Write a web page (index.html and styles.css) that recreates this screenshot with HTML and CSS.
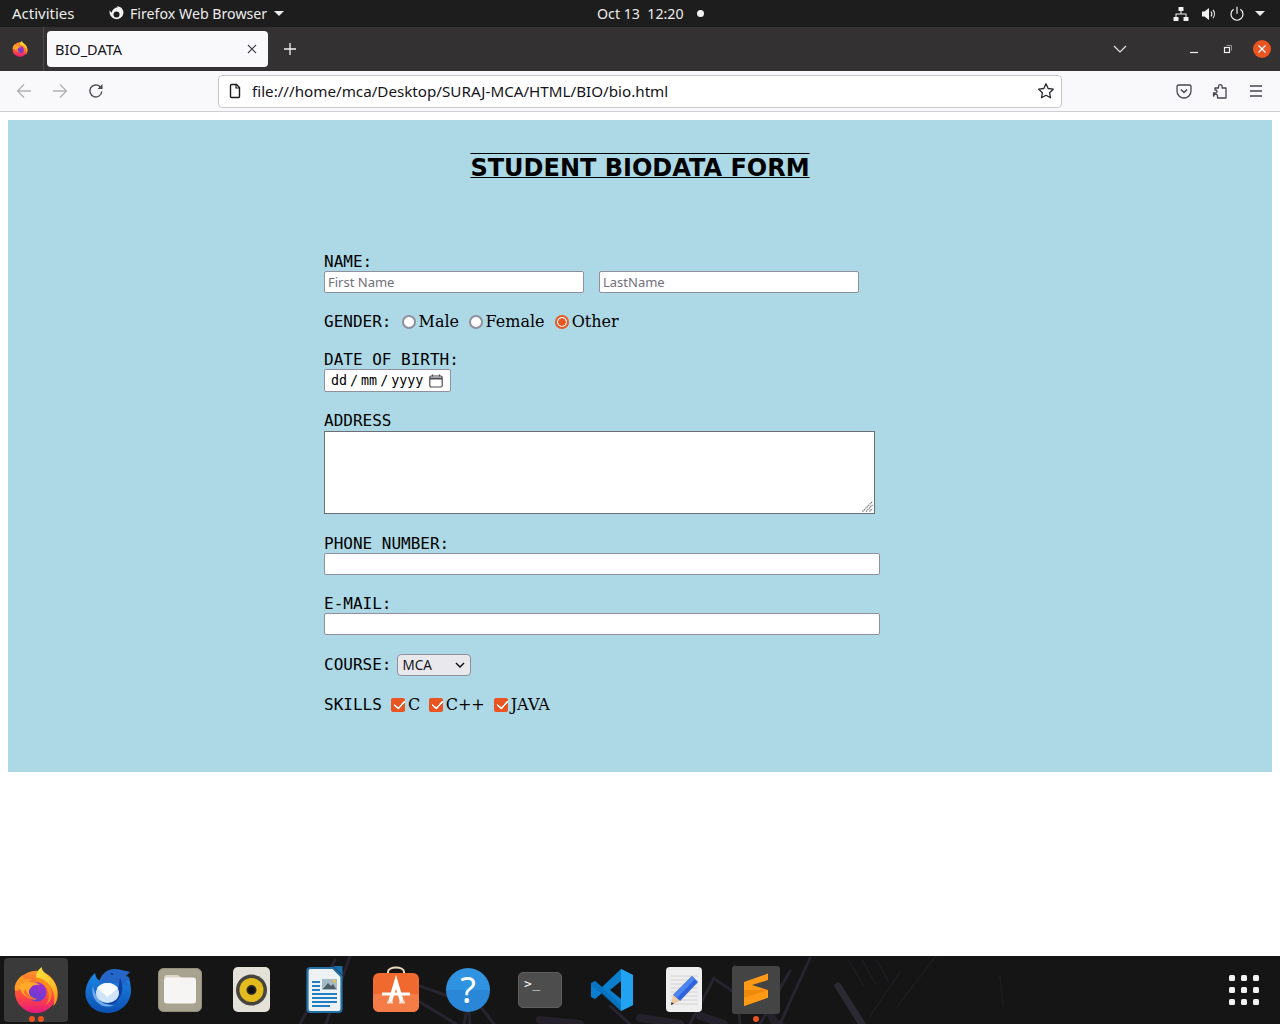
FILE: index.html
```html
<!DOCTYPE html>
<html lang="en">
<head>
<meta charset="utf-8">
<title>BIO_DATA</title>
<link rel="stylesheet" href="styles.css">
</head>
<body>
<svg class="defs" width="0" height="0" aria-hidden="true">
  <defs>
    <linearGradient id="ffBody" x1="0" y1="0" x2="0" y2="1"><stop offset="0" stop-color="#ff9226"/><stop offset=".6" stop-color="#ff4a3f"/><stop offset="1" stop-color="#e5187f"/></linearGradient>
    <linearGradient id="ffFlame" x1="0" y1="0" x2="1" y2="1"><stop offset="0" stop-color="#ffe53f"/><stop offset=".6" stop-color="#ffc12a"/><stop offset="1" stop-color="#ff8516"/></linearGradient>
    <linearGradient id="ffCore" x1="0.700" y1="0" x2="0.300" y2="1"><stop offset="0" stop-color="#a62fc6"/><stop offset="1" stop-color="#5a3ed8"/></linearGradient>
    <symbol id="firefox" viewBox="0 0 48 48">
      <circle cx="24" cy="26" r="22" fill="url(#ffBody)"/>
      <path d="M30 0c0 5 5 7 10 12 6 6 8 14 6 22-1 3-2 5-4 7 3-9 0-19-6-24-4-3-8-5-12-6 0-5 2-8 6-11z" fill="url(#ffFlame)"/>
      <path d="M2 24c-1-5 2-10 5-13 1-1 2-2 3-3 0 2 1 4 3 5 2-1 5-1 8 0-5 2-11 5-14 10-2 2-4 3-5 1z" fill="#ff9a24"/>
      <path d="M24 11c11 1 18 10 16 20-1 4-3 7-6 9 3-4 4-9 3-13-1-6-6-10-13-11z" fill="#ff8a1c"/>
      <circle cx="25" cy="26" r="10" fill="url(#ffCore)"/>
      <path d="M6 20c3-3 8-5 13-4 4 0 7 1 9 3-4-1-7 0-9 2-2 2-3 4-2 7 1 3 4 5 7 6-6 0-12-3-15-8-1-2-2-4-3-6z" fill="#ffab2a"/>
      <path d="M13 23c2 6 7 10 13 10-5 2-11 0-14-5-1-2 0-4 1-5z" fill="#ff6a2c"/>
    </symbol>
  </defs>
</svg>

<header class="topbar">
  <span class="activities">Activities</span>
  <span class="appmenu">
    <svg class="app-glyph" width="16" height="16" viewBox="0 0 16 16"><path d="M8 1.500c.6 0 1.200.1 1.700.2L9 0l3.500 1.300c1.800 1.200 3 3.300 3 5.700A7 7 0 1 1 1.800 4.300c.5 1.200 1.200 1.900 2 2.200C4.300 4 5.700 2.700 8 1.500z" fill="#f2f2f2"/><circle cx="8.500" cy="8.500" r="3" fill="#1d1d1d"/></svg>
    Firefox Web Browser
    <i class="caret"></i>
  </span>
  <span class="clock">Oct 13&nbsp; 12:20<i class="clock-dot"></i></span>
  <span class="tray">
    <svg width="16" height="16" viewBox="0 0 16 16" fill="#f2f2f2"><rect x="5.500" y="1" width="5" height="4" rx=".5"/><rect x=".5" y="11" width="5" height="4" rx=".5"/><rect x="10.500" y="11" width="5" height="4" rx=".5"/><path d="M7.500 5h1v2.500H13.500V11h-1V8.500H3.500V11h-1V7.500h5z"/></svg>
    <svg width="16" height="16" viewBox="0 0 16 16"><path d="M1 5.500h2.500L8 2v12l-4.500-3.500H1z" fill="#f2f2f2"/><path d="M10 5.500c1 1.400 1 3.600 0 5M12 3.800c1.900 2.400 1.900 6 0 8.400" fill="none" stroke="#f2f2f2" stroke-width="1.100"/></svg>
    <svg width="16" height="16" viewBox="0 0 16 16" fill="none" stroke="#f2f2f2" stroke-width="1.200"><path d="M4.600 3.300a6 6 0 1 0 6.800 0"/><path d="M8 .8v7"/></svg>
    <i class="caret tray-caret"></i>
  </span>
</header>

<div class="tabbar">
  <svg class="tab-ff" width="16" height="16"><use href="#firefox"/></svg>
  <i class="tab-sep"></i>
  <div class="tab">
    <span class="tab-title">BIO_DATA</span>
    <svg class="tab-close" width="10" height="10" viewBox="0 0 10 10" stroke="#45454d" stroke-width="1.100"><path d="M1 1l8 8M9 1l-8 8"/></svg>
  </div>
  <svg class="newtab" width="14" height="14" viewBox="0 0 14 14" stroke="#f4f4f4" stroke-width="1.300"><path d="M7 1v12M1 7h12"/></svg>
  <div class="win-controls">
    <svg class="chevron" width="14" height="8" viewBox="0 0 14 8" fill="none" stroke="#e4e4e4" stroke-width="1.200"><path d="M1 1l6 6 6-6"/></svg>
    <svg class="win-min" width="10" height="10" viewBox="0 0 10 10" stroke="#f2f2f2" stroke-width="1.200"><path d="M1 8.500h8"/></svg>
    <svg class="win-max" width="10" height="10" viewBox="0 0 10 10" fill="none" stroke="#f2f2f2"><rect x="1.500" y="3.500" width="5" height="5" stroke-width="1.200"/><path d="M3.500 1.500h5v5" stroke-width=".8" stroke="#aaa"/></svg>
    <span class="win-close"><svg width="10" height="10" viewBox="0 0 10 10" stroke="#fff" stroke-width="1.300"><path d="M1.500 1.500l7 7M8.500 1.500l-7 7"/></svg></span>
  </div>
</div>

<nav class="navbar">
  <svg class="nav-btn" width="16" height="16" viewBox="0 0 16 16" fill="none" stroke="#b1b1b3" stroke-width="1.300"><path d="M15 8H1.500M8 1.500L1.500 8 8 14.500"/></svg>
  <svg class="nav-btn" width="16" height="16" viewBox="0 0 16 16" fill="none" stroke="#b1b1b3" stroke-width="1.300"><path d="M1 8h13.500M8 1.500L14.500 8 8 14.500"/></svg>
  <svg class="nav-btn" width="16" height="16" viewBox="0 0 16 16" fill="none" stroke="#4a4a4f" stroke-width="1.400"><path d="M13.800 8.500a6 6 0 1 1-1.600-4.700L14 5.500"/><path d="M14.500 1v5h-5" fill="#4a4a4f" stroke="none"/></svg>
  <div class="urlbar">
    <svg class="url-file" width="16" height="16" viewBox="0 0 16 16" fill="none" stroke="#1b1b1f" stroke-width="1.400"><path d="M3.500 2.500c0-.6.400-1 1-1h5l3 3v9c0 .6-.4 1-1 1h-7c-.6 0-1-.4-1-1z"/><path d="M9 1.500V5h3.500" stroke-width="1.200"/></svg>
    <span class="url-text">file:///home/mca/Desktop/SURAJ-MCA/HTML/BIO/bio.html</span>
    <svg class="url-star" width="18" height="18" viewBox="0 0 18 18" fill="none" stroke="#2a2a2e" stroke-width="1.300" stroke-linejoin="round"><path d="M9 1.800l2.200 4.700 5.100.7-3.700 3.500.9 5.100L9 13.300l-4.500 2.500.9-5.100L1.700 7.200l5.100-.7z"/></svg>
  </div>
  <div class="nav-right">
    <svg width="16" height="16" viewBox="0 0 16 16" fill="none" stroke="#45454d" stroke-width="1.300"><path d="M2.500 2h11c.8 0 1.500.7 1.500 1.500V8a7 7 0 0 1-14 0V3.500C1 2.700 1.700 2 2.500 2z"/><path d="M5 6.500L8 9.500l3-3" stroke-width="1.500"/></svg>
    <svg width="16" height="16" viewBox="0 0 16 16" fill="none" stroke="#45454d" stroke-width="1.300" stroke-linejoin="round"><path d="M1.500 10h2a1.500 1.500 0 0 0 0-3h-.5V5h3.500V3.500a1.800 1.800 0 0 1 3.600 0V5H14v10H5.500v-2a1.800 1.800 0 0 0-3.600 0H1.500z"/></svg>
    <svg width="16" height="16" viewBox="0 0 16 16" stroke="#45454d" stroke-width="1.300"><path d="M2 3h12M2 8h12M2 13h12"/></svg>
  </div>
</nav>

<main class="page">
  <section class="panel">
    <h1 class="form-title">STUDENT BIODATA FORM</h1>
    <form class="bio-form">
      <div class="field">
        <label class="label">NAME:</label>
        <div class="name-row">
          <input class="text-input name-input" type="text" placeholder="First Name">
          <input class="text-input name-input" type="text" placeholder="LastName">
        </div>
      </div>
      <div class="field inline">
        <span class="label">GENDER:</span>
        <input class="radio r-male" type="radio" name="g"><span class="opt">Male</span>
        <input class="radio r-female" type="radio" name="g"><span class="opt">Female</span>
        <input class="radio r-other" type="radio" name="g" checked><span class="opt">Other</span>
      </div>
      <div class="field">
        <label class="label">DATE OF BIRTH:</label>
        <div class="date-input">
          <span>dd</span><span class="date-sep">/</span><span>mm</span><span class="date-sep">/</span><span>yyyy</span>
          <svg class="date-icon" width="14" height="14" viewBox="0 0 14 14" fill="none" stroke="#4a4a50" stroke-width="1.200"><rect x=".8" y="2" width="12.400" height="11" rx="1.500"/><path d="M1 4.500h12" stroke-width="2"/><path d="M3.500 .5v2M10.500 .5v2"/></svg>
        </div>
      </div>
      <div class="field">
        <label class="label">ADDRESS</label>
        <div class="address-wrap">
          <textarea class="address"></textarea>
          <svg class="resizer" width="11" height="11" viewBox="0 0 11 11" fill="none" stroke="#777" stroke-width="1.200" stroke-dasharray="1.400 .6"><path d="M.5 10.500l10-10M4 10.500l6.500-6.500M7.500 10.500l3-3"/></svg>
        </div>
      </div>
      <div class="field">
        <label class="label">PHONE NUMBER:</label>
        <input class="text-input wide-input" type="text">
      </div>
      <div class="field">
        <label class="label">E-MAIL:</label>
        <input class="text-input wide-input" type="text">
      </div>
      <div class="field inline course-row">
        <span class="label">COURSE:</span>
        <span class="select-wrap">
          <select class="course"><option>MCA</option></select>
          <svg class="select-arrow" width="10" height="6" viewBox="0 0 10 6" fill="none" stroke="#15141a" stroke-width="1.500"><path d="M1 1l4 4 4-4"/></svg>
        </span>
      </div>
      <div class="field inline">
        <span class="label">SKILLS</span>
        <input class="check c-c" type="checkbox" checked><span class="opt">C</span>
        <input class="check c-cpp" type="checkbox" checked><span class="opt">C++</span>
        <input class="check c-java" type="checkbox" checked><span class="opt">JAVA</span>
      </div>
    </form>
  </section>
</main>

<footer class="dock">
  <svg class="wallpaper" width="1280" height="68" viewBox="0 0 1280 68" fill="none" stroke-linecap="round">
    <g stroke="#272430" stroke-width="3">
      <path d="M335 4L300 68M350 0l-24 68M420 30l50 18M420 46l36 22M466 14l4 54M470 40l-6 28M480 50l14 18M690 68l24-46M716 24l66 44M735 10l5 58M790 15l-30 53M810 2l-30 66M610 50l20 18"/>
    </g>
    <g stroke="#24212a" stroke-width="8">
      <path d="M540 64l40 4M640 62l40 6M755 22l20 46M700 60l24 8"/>
    </g>
    <g stroke="#2b2931" stroke-width="7">
      <path d="M838 30l24 38"/>
    </g>
    <g stroke="#1e1c22" stroke-width="1.500">
      <path d="M848 4l16 26M862 4l14 24M876 4l12 20M900 16l-30 44M936 0l-40 52M1000 20l3 30"/>
    </g>
  </svg>

  <div class="dock-item active">
    <svg width="46" height="46"><use href="#firefox"/></svg>
    <span class="dots"><i></i><i></i></span>
  </div>

  <div class="dock-item">
    <svg width="48" height="48" viewBox="0 0 48 48">
      <defs><linearGradient id="tbBlue" x1="0" y1="0" x2="0" y2="1"><stop offset="0" stop-color="#1e88e6"/><stop offset="1" stop-color="#0b50b4"/></linearGradient></defs>
      <path d="M11 7C3 14 0 24 2 32c3 10 12 15 22 15 12 0 22-9 23-21 0-6-1-12-3-16l-4 3-22 2c-3 0-6-2-7-8z" fill="url(#tbBlue)"/>
      <path d="M15 17c1-8 8-14 15-14 6 0 11 2 16 3l-4 4 4 3-4 2 2 5c-6-2-12-4-29-3z" fill="#2566c9"/>
      <circle cx="28" cy="8" r="1" fill="#0b2f70"/>
      <path d="M36 12c4 8 3 17-3 23-5 4-11 5-16 3 9-1 15-6 17-13 1-4 1-9 2-13z" fill="#0f3f9f"/>
      <path d="M9 20c-2 8 1 15 8 19 4 2 9 2 13 0-7 0-13-2-16-7-3-4-4-8-5-12z" fill="#6da8ec"/>
      <ellipse cx="23.500" cy="27" rx="11.500" ry="10" fill="#cfe3f9"/>
      <path d="M13 22c2-3 6-5 10.500-5s8.500 2 10.500 5L23.500 31z" fill="#fafcff"/>
    </svg>
  </div>

  <div class="dock-item">
    <svg width="48" height="48" viewBox="0 0 48 48">
      <rect x="2" y="2" width="44" height="44" rx="6" fill="#a8a290"/>
      <rect x="2.500" y="2.500" width="43" height="43" rx="5.500" fill="none" stroke="#928c7b"/>
      <path d="M8 12c0-1.500 1-3 3-3h11l4 3z" fill="#dcd8cc"/>
      <rect x="8" y="11.500" width="32" height="26" rx="3" fill="#f6f5f3"/>
    </svg>
  </div>

  <div class="dock-item">
    <svg width="48" height="48" viewBox="0 0 48 48">
      <rect x="5" y="1" width="37" height="45" rx="5" fill="#e4e1d8"/>
      <circle cx="23.500" cy="24" r="15.500" fill="#45443f"/>
      <circle cx="23.500" cy="24" r="12" fill="#e3bb1c"/>
      <circle cx="23.500" cy="24" r="5" fill="#2a2a28"/>
      <circle cx="23.500" cy="24" r="3.200" fill="#111"/>
    </svg>
  </div>

  <div class="dock-item">
    <svg width="48" height="48" viewBox="0 0 48 48">
      <path d="M7.500 5c0-2 1-3 3-3H33l8.500 8.500V43c0 2-1 3-3 3h-28c-2 0-3-1-3-3z" fill="#eef2f5" stroke="#2272a8" stroke-width="2.200"/>
      <path d="M33 0h9.500v9.500z" fill="#1a6ea8"/>
      <rect x="12" y="15" width="8" height="2" fill="#1f7fc0"/><rect x="12" y="19" width="8" height="2" fill="#1f7fc0"/><rect x="12" y="23" width="8" height="2" fill="#1f7fc0"/>
      <rect x="22" y="13" width="15" height="11" fill="#a3b9c7"/>
      <path d="M23 23l5-6 3 3 2-2 3 5z" fill="#4e5d66"/><rect x="33" y="14" width="3" height="2.500" fill="#e9c343"/>
      <rect x="12" y="27" width="25" height="2" fill="#1f7fc0"/><rect x="12" y="31" width="25" height="2" fill="#1f7fc0"/><rect x="12" y="35" width="25" height="2" fill="#1f7fc0"/><rect x="12" y="39" width="18" height="2" fill="#1f7fc0"/>
    </svg>
  </div>

  <div class="dock-item">
    <svg width="48" height="48" viewBox="0 0 48 48">
      <path d="M16 11V6c0-6 16-6 16 0v5" fill="none" stroke="#f0d8bc" stroke-width="2"/>
      <rect x="1" y="7" width="46" height="39" rx="6" fill="#f0692e"/>
      <path d="M1 28h46v12c0 3-3 6-6 6H7c-3 0-6-3-6-6z" fill="#f47d47"/>
      <path d="M18 36l6-20 6 20" fill="none" stroke="#fff" stroke-width="4"/>
      <path d="M10 28h28" stroke="#fff" stroke-width="3"/>
      <path d="M15 36.500h6M27 36.500h6" stroke="#f8dccb" stroke-width="2"/>
    </svg>
  </div>

  <div class="dock-item">
    <span class="help-icon">?</span>
  </div>

  <div class="dock-item">
    <span class="terminal-icon">&gt;_</span>
  </div>

  <div class="dock-item">
    <svg width="48" height="48" viewBox="0 0 48 48">
      <path d="M33 3l12 6v30l-12 6-19-18-7 6-4-2V17l4-2 7 6zM33 15L22 24l11 9z" fill="#0a7fd0"/>
      <path d="M33 3l12 6v30l-12 6z" fill="#21a3f1"/>
      <path d="M3 17l4-2 26 24v6L3 19z" fill="#0669b3" opacity=".55"/>
    </svg>
  </div>

  <div class="dock-item">
    <svg width="48" height="48" viewBox="0 0 48 48">
      <rect x="6" y="1" width="36" height="45" rx="4" fill="#efefef"/>
      <path d="M10 10h28M10 14h28M10 18h28M10 22h28M10 26h28M10 30h28M10 34h28M10 38h28" stroke="#d2d2d2"/>
      <path d="M32 10l6 6-18 19-7-6z" fill="#2f62dc"/>
      <path d="M32 10l3 3-18 19-4-3z" fill="#4c86ee"/>
      <path d="M13 29l7 6-9 4z" fill="#ecc9a0"/>
      <path d="M11.500 36l-.5 3 3-1.200z" fill="#333"/>
    </svg>
  </div>

  <div class="dock-item">
    <svg width="48" height="48" viewBox="0 0 48 48">
      <rect width="48" height="48" rx="3" fill="#444444"/>
      <path d="M36 7.500L12 16v8l24 8v-8L20 19l16-5z" fill="#ff9a17"/>
      <path d="M12 24v16l24-8.500V24z" fill="#f08a0d"/>
      <path d="M36 24L12 32v8l24-8.500z" fill="#ff9a17"/>
    </svg>
    <span class="dots"><i></i></span>
  </div>

  <div class="app-grid">
    <i></i><i></i><i></i><i></i><i></i><i></i><i></i><i></i><i></i>
  </div>
</footer>
</body>
</html>
```

FILE: styles.css
```css
* { box-sizing: border-box; }

html, body { margin: 0; padding: 0; }

body {
  width: 1280px;
  height: 1024px;
  overflow: hidden;
  display: flex;
  flex-direction: column;
  background: #fff;
  font-family: "Noto Sans", sans-serif;
  position: relative;
}

.defs { position: absolute; }

/* GNOME top bar */
.topbar {
  height: 27px;
  background: #1d1d1d;
  color: #ececec;
  font-size: 14.200px;
  display: flex;
  align-items: center;
  position: relative;
  flex: none;
}

.activities {
  margin-left: 12px;
  padding-bottom: 2px;
  font-size: 15px;
}

.appmenu {
  margin-left: 33px;
  display: flex;
  align-items: center;
  gap: 6.500px;
}

.caret {
  width: 0;
  height: 0;
  border-left: 5px solid transparent;
  border-right: 5px solid transparent;
  border-top: 5px solid #ececec;
}

.clock {
  position: absolute;
  left: 597px;
  top: 0;
  line-height: 27px;
  display: flex;
  align-items: center;
}

.clock-dot {
  width: 7px;
  height: 7px;
  border-radius: 50%;
  background: #f2f2f2;
  margin-left: 13px;
}

.tray {
  margin-left: auto;
  margin-right: 15px;
  display: flex;
  align-items: center;
  gap: 12px;
}

.tray-caret { margin-left: -2px; }

/* Browser tab strip */
.tabbar {
  height: 44px;
  flex: none;
  background: #333132;
  display: flex;
  align-items: center;
}

.tab-ff { margin-left: 12px; }

.tab-sep {
  width: 1px;
  height: 44px;
  margin-left: 15px;
  background: #4c4a4b;
}

.tab {
  width: 221px;
  height: 36px;
  margin-left: 3px;
  background: #f9f9fb;
  border-radius: 4px;
  display: flex;
  align-items: center;
  padding: 0 11px 0 8px;
  color: #15141a;
  font-size: 14.500px;
}

.tab-title { flex: 1; }

.newtab { margin-left: 15px; }

.win-controls {
  margin-left: auto;
  display: flex;
  align-items: center;
  padding-right: 9px;
}

.chevron { margin-right: 62px; }
.win-min { margin-right: 24px; }
.win-max { margin-right: 20px; }

.win-close {
  width: 18px;
  height: 18px;
  border-radius: 50%;
  background: #e95420;
  display: flex;
  align-items: center;
  justify-content: center;
}

/* Browser toolbar */
.navbar {
  height: 41px;
  flex: none;
  background: #f9f9fb;
  border-bottom: 1px solid #cfcfd2;
  display: flex;
  align-items: center;
  padding-left: 16px;
}

.nav-btn { margin-right: 20px; }

.urlbar {
  width: 844px;
  height: 33px;
  margin-left: 94px;
  background: #fff;
  border: 1px solid #c8c8cb;
  border-radius: 4px;
  display: flex;
  align-items: center;
  padding: 0 6px 0 8px;
  font-size: 15.200px;
  color: #15141a;
}

.url-text { margin-left: 9px; flex: 1; }

.nav-right {
  display: flex;
  gap: 20px;
  margin-left: 114px;
}

/* Page content */
.page {
  flex: 1;
  padding: 8px;
  min-height: 0;
}

.panel {
  background: #add8e6;
  height: 652px;
  padding-top: 34px;
}

.form-title {
  margin: 0;
  text-align: center;
  font-family: "DejaVu Sans", sans-serif;
  font-size: 24px;
  line-height: 28px;
  font-weight: 700;
  color: #000;
  text-decoration: underline overline;
  text-decoration-thickness: 1px;
}

.bio-form {
  margin: 70px 0 0 316px;
  width: 600px;
  display: flex;
  flex-direction: column;
  gap: 19px;
  color: #000;
}

.label {
  display: block;
  font-family: "DejaVu Sans Mono", monospace;
  font-size: 16px;
  line-height: 19px;
}

.field.inline {
  display: flex;
  align-items: center;
  height: 19px;
}

.field.course-row { height: 22px; }

.course-row .label { margin-bottom: 1px; }

.opt {
  font-family: "DejaVu Serif", serif;
  font-size: 16px;
  line-height: 19px;
  margin-left: 2.500px;
}

.name-row {
  display: flex;
  gap: 15px;
}

.text-input {
  display: block;
  height: 22px;
  padding: 0 3px;
  margin: 0;
  background: #fff;
  border: 1px solid #8f8f9d;
  border-radius: 2px;
  font-family: "Noto Sans", sans-serif;
  font-size: 13px;
}

.text-input::placeholder { color: #70707a; opacity: 1; }

.name-input { width: 260px; }
.wide-input { width: 556px; }

.radio {
  appearance: none;
  width: 14px;
  height: 14px;
  margin: 0;
  background: #fff;
  border: 2px solid #8f8f9d;
  border-radius: 50%;
  flex: none;
}

.radio:checked {
  border-color: #e95420;
  background: radial-gradient(circle, #e95420 0 3.500px, #fff 4px);
}

.r-male { margin-left: 10.600px; }
.r-female { margin-left: 10px; }
.r-other { margin-left: 10.600px; }

.check {
  appearance: none;
  width: 14px;
  height: 14px;
  margin: 0;
  background: #e95420;
  border-radius: 2px;
  flex: none;
  position: relative;
}

.check::after {
  content: "";
  position: absolute;
  left: 4.500px;
  top: .500px;
  width: 5px;
  height: 9px;
  border: solid #fff;
  border-width: 0 2.200px 2.200px 0;
  border-radius: 1px;
  transform: rotate(42deg);
}

.c-c { margin-left: 9.600px; }
.c-cpp { margin-left: 9px; }
.c-java { margin-left: 9.500px; }

.date-input {
  width: 127px;
  height: 23px;
  background: #fff;
  border: 1px solid #8f8f9d;
  border-radius: 2px;
  display: flex;
  align-items: center;
  padding-left: 6px;
  font-family: "DejaVu Sans Mono", monospace;
  font-size: 13.330px;
  color: #000;
}

.date-sep { margin: 0 3px; }
.date-icon { margin-left: 6px; }

.address-wrap {
  position: relative;
  width: 551px;
  height: 83px;
  margin: 1px 0;
}

.address {
  display: block;
  width: 551px;
  height: 83px;
  margin: 0;
  background: #fff;
  border: 1px solid #6d6d76;
  border-radius: 0;
  outline: none;
  resize: none;
}

.resizer {
  position: absolute;
  right: 2px;
  bottom: 2px;
}

.select-wrap {
  position: relative;
  display: block;
  margin-left: 6px;
}

.course {
  appearance: none;
  display: block;
  width: 74px;
  height: 22px;
  margin: 0;
  padding: 0 0 0 4px;
  background: #e9e9ed;
  border: 1px solid #8f8f9d;
  border-radius: 4px;
  color: #15141a;
  font-family: "Noto Sans", sans-serif;
  font-size: 13.500px;
}

.select-arrow {
  position: absolute;
  right: 6px;
  top: 8px;
}

/* Ubuntu dock */
.dock {
  height: 68px;
  flex: none;
  background: #151515;
  display: flex;
  position: relative;
  overflow: hidden;
}

.wallpaper {
  position: absolute;
  left: 0;
  top: 0;
  filter: blur(.7px);
}

.dock-item {
  width: 72px;
  height: 68px;
  flex: none;
  position: relative;
  display: flex;
  align-items: center;
  justify-content: center;
}

.dock-item.active::before {
  content: "";
  position: absolute;
  left: 4px;
  top: 2px;
  width: 64px;
  height: 64px;
  border-radius: 4px;
  background: #3a3a3a;
}

.dock-item svg { position: relative; }

.dots {
  position: absolute;
  left: 0;
  right: 0;
  bottom: 2px;
  display: flex;
  justify-content: center;
  gap: 3px;
}

.dots i {
  width: 6px;
  height: 6px;
  border-radius: 50%;
  background: #e95420;
}

.help-icon {
  width: 44px;
  height: 44px;
  border-radius: 50%;
  background: linear-gradient(#2f93e2 50%, #2a86d6 50%);
  color: #fff;
  font-family: "Noto Sans", sans-serif;
  font-size: 36px;
  line-height: 44px;
  text-align: center;
  position: relative;
}

.terminal-icon {
  width: 44px;
  height: 36px;
  border-radius: 5px;
  background: #4d4d4d;
  border: 1px solid #606060;
  color: #f4f4f4;
  font-family: "DejaVu Sans Mono", monospace;
  font-size: 13px;
  line-height: 15px;
  letter-spacing: .5px;
  padding: 3px 0 0 5px;
  position: relative;
}

.app-grid {
  position: absolute;
  right: 21px;
  top: 19px;
  display: grid;
  grid-template-columns: repeat(3, 6px);
  gap: 6px;
}

.app-grid i {
  width: 6px;
  height: 6px;
  border-radius: 1.500px;
  background: #f2f2f2;
}
```
